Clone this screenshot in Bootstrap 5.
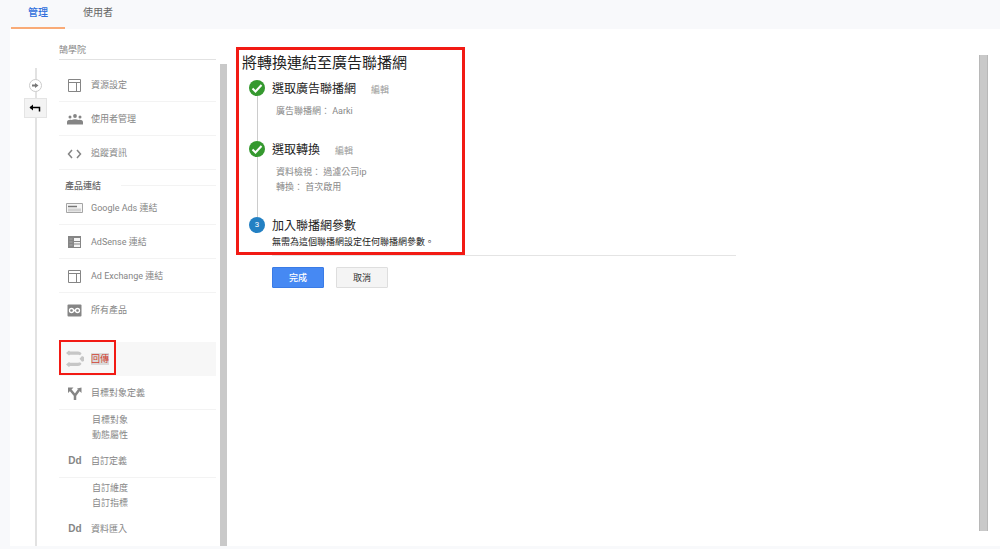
<!DOCTYPE html>
<html lang="zh-Hant">
<head>
<meta charset="utf-8">
<meta name="viewport" content="width=device-width, initial-scale=1">
<title>管理</title>
<link href="https://cdn.jsdelivr.net/npm/bootstrap@5.3.0/dist/css/bootstrap.min.css" rel="stylesheet">
<style>
  body { background: #f8f9fb; font-family: Roboto, "Noto Sans CJK TC", sans-serif; font-size: 9px; line-height: 15px; color: #222; }
  a { text-decoration: none; color: inherit; }
  .top-tabs { height: 29px; padding-left: 11px; }
  .top-tabs .nav-link { width: 54px; height: 29px; padding: 5px 0 0; text-align: center; font-size: 10px; line-height: 16px; color: #666; border-bottom: 2px solid transparent; }
  .top-tabs .nav-link.active { color: #2f6fdc; font-weight: 500; border-color: #f9ab77; }
  .top-tabs .nav-item + .nav-item { margin-left: 6px; }
  .panel { background: #fff; margin: 0 0 3px 10px; }

  /* collapse rail */
  .rail { width: 23px; margin: 39px 12px 0 14px; background: linear-gradient(#e2e2e2, #e2e2e2) 11px 0 / 2px 100% no-repeat; }
  .rail svg { display: block; }
  .rail-dot { width: 13px; height: 13px; margin: 11px 0 6px; border: 1px solid #ccc; border-radius: 50%; background: #fff; padding: 0; color: #777; }
  .rail-back { width: 23px; height: 20px; padding: 0; border: 1px solid #e4e4e4; background: #f3f3f3; color: #000; }

  /* side menu */
  .side { width: 157px; color: #858585; }
  .account { height: 31px; padding-top: 14px; border-bottom: 1px solid #e2e2e2; margin-bottom: 8px; color: #888; }
  .side-row { height: 34px; border-bottom: 1px solid #f3f3f3; position: relative; }
  .side-row span { padding-top: 2px; }
  .side-row svg, .side-row .glyph { width: 18px; height: 18px; margin: 0 7px; flex: none; color: #858585; }
  .side-row .glyph { font: bold 10px/18px "Liberation Sans", sans-serif; padding: 0; text-align: center; }
  .side-row.plain { border-color: transparent; }
  .group-label { height: 21px; padding: 10px 0 0 6px; line-height: 14px; color: #666; font-weight: 500; gap: 20px; }
  .group-label::after { content: ""; flex: 1; border-top: 1px solid #f3f3f3; }
  .side .selected { margin-top: 15px; background: #f7f7f7; color: #d23f31; }
  .selected span { background: #dadada; line-height: 12px; padding: 0; }
  .side .selected svg { color: #c6c6c6; }
  .frame { border: 3px solid #f21a14; }
  .mark-nav { position: absolute; left: 0; top: -2px; width: 57px; height: 35px; border-width: 2px; }
  .sub-menu { padding: 3px 0 1px 33px; color: #888; }
  .bar { background: #c9c9c9; }
  .side-bar { width: 7px; margin: 35px 9px 0 4px; }
  .page-bar { width: 9px; margin: 26px 12px 15px 0; border: 1px solid #b8b8b8; border-width: 0 1px; }

  /* wizard */
  .wizard { max-width: 500px; padding-top: 18px; }
  .wizard-box { width: 229px; height: 208px; padding: 0 0 0 3px; }
  .wizard h1 { font-size: 15px; line-height: 26px; font-weight: 400; margin: 0 0 4px; }
  .wizard h2 { font-size: 12px; line-height: 18px; font-weight: 400; margin: 0; }
  .steps { margin: 0 0 0 7px; }
  .step-mark { width: 16px; margin-right: 7px; }
  .step-mark i { width: 16px; height: 16px; flex: none; border-radius: 50%; background: #35992f; color: #fff; font: 8px/16px Roboto, sans-serif; text-align: center; }
  .step-mark i svg { display: block; }
  .step-mark .now { background: #2380c3; }
  .step-mark b { width: 1px; background: #ccc; }
  .details { padding: 6px 0 22px 4px; color: #888; }
  .edit { margin: 2px 0 0 15px; color: #999; }
  .actions { border-top: 1px solid #e4e4e4; margin-left: 36px; padding-top: 11px; gap: 12px; }
  .actions .btn { width: 52px; height: 21px; padding: 0; border-radius: 1px; font-size: 9px; line-height: 18px; }
  .actions .btn-primary { background: #4689f3; border-color: #3a7be6; font-weight: 500; }
  .actions .btn-light { background: #f4f4f4; border-color: #dedede; color: #333; }
</style>
</head>
<body class="d-flex flex-column min-vh-100">
<ul class="nav top-tabs flex-nowrap">
  <li class="nav-item"><a class="nav-link active" href="#">管理</a></li>
  <li class="nav-item"><a class="nav-link" href="#">使用者</a></li>
</ul>

<div class="panel d-flex flex-grow-1">
  <div class="rail d-flex flex-column align-items-center flex-shrink-0">
    <button class="rail-dot" aria-label="展開"><svg viewBox="0 0 11 11" width="11" height="11"><path d="M2 4.500h3V3l3.500 2.500L5 8V6.500H2z" fill="currentColor"/></svg></button>
    <button class="rail-back" aria-label="返回"><svg viewBox="0 0 21 18" width="21" height="18"><path d="M5 8.500h9.500v4" fill="none" stroke="currentColor" stroke-width="1.500"/><path d="M4.500 8.500L8 5.500v6z" fill="currentColor"/></svg></button>
  </div>

  <nav class="side flex-shrink-0">
    <div class="account">鵠學院</div>
    <a class="side-row d-flex align-items-center" href="#"><svg viewBox="0 0 18 18"><path d="M2.500 3.500h12v12h-12zM2.500 6.500h12M10.500 6.500v9" fill="none" stroke="currentColor"/></svg><span>資源設定</span></a>
    <a class="side-row d-flex align-items-center" href="#"><svg viewBox="0 0 18 18" fill="currentColor"><circle cx="4" cy="7" r="1.500"/><circle cx="9" cy="6" r="1.900"/><circle cx="14" cy="7" r="1.500"/><path d="M1 14.500V12C1 10 4 9.500 5.500 10.100 7.500 8.800 10.500 8.800 12.500 10.100 14 9.500 17 10 17 12v2.500z"/></svg><span>使用者管理</span></a>
    <a class="side-row d-flex align-items-center" href="#"><svg viewBox="0 0 18 18"><path d="M6 6L2.500 10l3.500 4M11 6l3.500 4-3.500 4" fill="none" stroke="currentColor" stroke-width="1.500"/></svg><span>追蹤資訊</span></a>
    <div class="group-label d-flex align-items-center">產品連結</div>
    <a class="side-row d-flex align-items-center" href="#"><svg viewBox="0 0 18 18"><path d="M.5 4.500h16v9H.5z" fill="#f6f6f6" stroke="#a5a5a5"/><path d="M2 7.500h9" stroke="#777" stroke-width="1.500"/><path d="M2 9.500h13v3H2z" fill="#d2d2d2"/></svg><span>Google Ads 連結</span></a>
    <a class="side-row d-flex align-items-center" href="#"><svg viewBox="0 0 18 18"><path d="M2 3h13v12H2z" fill="currentColor"/><path d="M8 5h6v3H8zM8 9h6v1.500H8zM8 11.500h6V14H8z" fill="#f4f4f4"/><path d="M3.500 6h3M3.500 9h3M3.500 12h3" stroke="#aaa"/></svg><span>AdSense 連結</span></a>
    <a class="side-row d-flex align-items-center" href="#"><svg viewBox="0 0 18 18"><path d="M2.500 3.500h12v12h-12zM2.500 6.500h12M10.500 6.500v9" fill="none" stroke="currentColor"/></svg><span>Ad Exchange 連結</span></a>
    <a class="side-row plain d-flex align-items-center" href="#"><svg viewBox="0 0 18 18"><rect x="1.500" y="3.500" width="14" height="12" rx="1" fill="currentColor"/><g fill="none" stroke="#fff" stroke-width="1.300"><circle cx="5.500" cy="9.500" r="2"/><circle cx="11.500" cy="9.500" r="2"/><path d="M7.500 10.500l2-2"/></g></svg><span>所有產品</span></a>
    <a class="side-row plain selected d-flex align-items-center" href="#"><svg viewBox="0 0 18 18" fill="currentColor"><path d="M0 3L3 .5l1 1h8c2 0 3 1 3.500 2.200l-1.500 1.500C13 4.800 12.500 4.800 12 4.800H4L3 5.500zM0 14.500L3 12l1 .7h8c.5 0 1 0 2-.4l1.500 1.500C15 15 14 16 12 16H4l-1 1z"/><path d="M13.500 8.800L16 6l2 1v4l-2 .700z"/></svg><span>回傳</span><div class="frame mark-nav"></div></a>
    <a class="side-row d-flex align-items-center" href="#"><svg viewBox="0 0 18 18"><path d="M9 16v-4.500L4.500 6M9 11.500L13 6" fill="none" stroke="currentColor" stroke-width="2.500"/><path d="M2 3.500h5.500L2 9zM15.500 3.500V9l-4.500-4.500z" fill="currentColor"/></svg><span>目標對象定義</span></a>
    <div class="sub-menu d-flex flex-column"><a href="#">目標對象</a><a href="#">動態屬性</a></div>
    <a class="side-row d-flex align-items-center" href="#"><span class="glyph">Dd</span><span>自訂定義</span></a>
    <div class="sub-menu d-flex flex-column"><a href="#">自訂維度</a><a href="#">自訂指標</a></div>
    <a class="side-row plain d-flex align-items-center" href="#"><span class="glyph">Dd</span><span>資料匯入</span></a>
  </nav>
  <div class="bar side-bar flex-shrink-0"></div>

  <main class="flex-grow-1">
    <div class="wizard">
      <section class="frame wizard-box">
        <h1>將轉換連結至廣告聯播網</h1>
        <ol class="steps list-unstyled">
          <li class="d-flex">
            <div class="step-mark d-flex flex-column align-items-center"><i><svg viewBox="0 0 16 16" width="16" height="16"><path d="M3.500 8.500l3 3 6-6.500" fill="none" stroke="#fff" stroke-width="2"/></svg></i><b class="flex-grow-1"></b></div>
            <div><div class="d-flex align-items-center"><h2>選取廣告聯播網</h2><a class="edit" href="#">編輯</a></div>
              <div class="details">廣告聯播網： Aarki</div></div>
          </li>
          <li class="d-flex">
            <div class="step-mark d-flex flex-column align-items-center"><i><svg viewBox="0 0 16 16" width="16" height="16"><path d="M3.500 8.500l3 3 6-6.500" fill="none" stroke="#fff" stroke-width="2"/></svg></i><b class="flex-grow-1"></b></div>
            <div><div class="d-flex align-items-center"><h2>選取轉換</h2><a class="edit" href="#">編輯</a></div>
              <div class="details">資料檢視： 過濾公司ip<br>轉換： 首次啟用</div></div>
          </li>
          <li class="d-flex">
            <div class="step-mark"><i class="now d-block">3</i></div>
            <div><h2>加入聯播網參數</h2><div>無需為這個聯播網設定任何聯播網參數。</div></div>
          </li>
        </ol>
      </section>
      <div class="actions d-flex"><button class="btn btn-primary">完成</button><button class="btn btn-light">取消</button></div>
    </div>
  </main>
  <div class="bar page-bar flex-shrink-0"></div>
</div>
<script src="https://cdn.jsdelivr.net/npm/bootstrap@5.3.0/dist/js/bootstrap.bundle.min.js"></script>
</body>
</html>
